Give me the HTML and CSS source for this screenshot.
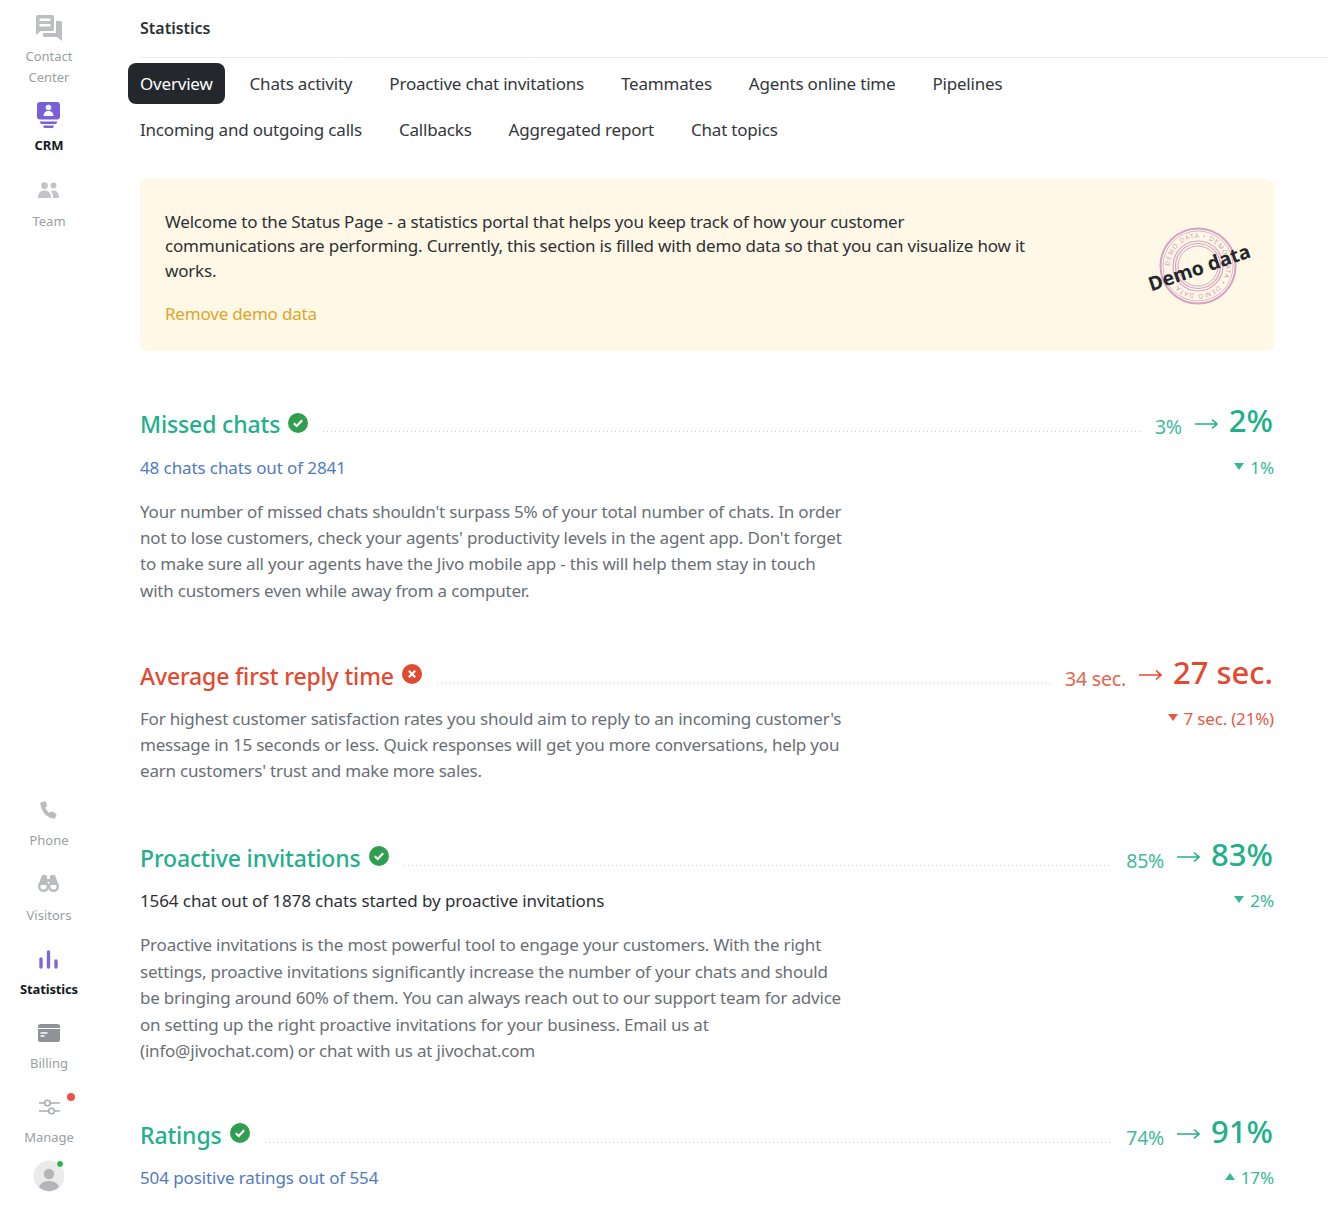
FILE: index.html
```html
<!DOCTYPE html>
<html lang="en">
<head>
<meta charset="utf-8">
<title>Statistics</title>
<link rel="stylesheet" href="styles.css">
</head>
<body>
<div class="app">
  <nav class="side">
    <div class="side-group">
      <a class="nav nav-contact"><svg width="26" height="26" viewBox="0 0 26 26"><path fill="#bcbec1" d="M0 1.500A1.500 1.500 0 0 1 1.500 0h15A1.500 1.500 0 0 1 18 1.500v13a1.500 1.500 0 0 1-1.500 1.500H5l-5 4z"/><path fill="#fff" d="M3.500 3.500h11v2.500h-11zM3.500 9h11v2.500h-11z"/><path fill="#bcbec1" d="M20 6h4.500A1.500 1.500 0 0 1 26 7.500V26l-5-4H8.500A1.500 1.500 0 0 1 7 20.500V18h13z"/></svg><span>Contact<br>Center</span></a>
      <a class="nav nav-crm active"><svg width="23" height="26" viewBox="0 0 23 26"><rect width="23" height="17.500" rx="3" fill="#7a5fd6"/><circle cx="11.500" cy="5.500" r="2.800" fill="#fff"/><path fill="#fff" d="M6.500 14c0-3 2-5 5-5s5 2 5 5z"/><path fill="#7a5fd6" d="M2.500 19.500h18L19 22H4zM6 23.500h11L16 26H7z"/></svg><span>CRM</span></a>
      <a class="nav nav-team"><svg width="21" height="16" viewBox="0 0 21 16"><circle cx="6.500" cy="3.600" r="3.400" fill="#c2c4c7"/><circle cx="15.500" cy="3.600" r="3" fill="#c2c4c7"/><path fill="#c2c4c7" d="M0 16c0-5 2.500-7.500 6.500-7.500S13 11 13 16zM15 16c0-3-.6-5-2-6.800 1-.5 1.700-.7 2.700-.7 3 0 5.300 2.500 5.300 7.500z"/></svg><span>Team</span></a>
    </div>
    <div class="side-group">
      <a class="nav"><svg width="18" height="18" viewBox="0 0 18 18"><path fill="#b9bbbe" d="M1.200 1.200 4.500.2c.7-.2 1.200.2 1.400.8L7 4.200c.2.600 0 1-.4 1.400L5.300 6.700c.8 2 2.200 3.900 4.200 5.100l1.400-1.100c.5-.4 1-.4 1.500-.1l3.600 2.100c.6.400.7.900.4 1.500l-1.200 2.700c-.3.500-.8.700-1.400.6C6 16.500 1.500 10.500.3 2.500c-.1-.6.400-1.100.9-1.300z"/></svg><span>Phone</span></a>
      <a class="nav nav-visitors"><svg width="21" height="17" viewBox="0 0 21 17"><path fill="#b9bbbe" d="M3.500 1.500C3.500.500 4.300 0 5.500 0H7c1.200 0 2 .5 2 1.500V4h3V1.500C12 .5 12.800 0 14 0h1.500c1.200 0 2 .5 2 1.500l3 8.500h-8l-.5-3h-3l-.5 3H.5z"/><circle cx="5.500" cy="11.500" r="4.300" fill="none" stroke="#b9bbbe" stroke-width="2.400"/><circle cx="15.500" cy="11.500" r="4.300" fill="none" stroke="#b9bbbe" stroke-width="2.400"/></svg><span>Visitors</span></a>
      <a class="nav active"><svg width="19" height="19" viewBox="0 0 19 19"><path stroke="#7f68d3" stroke-width="3.400" stroke-linecap="round" d="M2 9v8M9.500 2v15M17 11v6"/></svg><span class="tight">Statistics</span></a>
      <a class="nav"><svg width="22" height="18" viewBox="0 0 22 18"><rect width="22" height="18" rx="2.500" fill="#8e9399"/><path stroke="#fff" stroke-width="1" d="M0 4.500h22"/><path stroke="#fff" stroke-width="1.300" d="M2.500 9h7M2.500 12h4"/></svg><span>Billing</span></a>
      <a class="nav"><svg width="21" height="18" viewBox="0 0 21 18"><g fill="none" stroke="#a9acb0" stroke-width="1.600"><path d="M0 5h6M11.500 5H21M0 13h9.500M15 13h6"/><circle cx="8.500" cy="5" r="2.800"/><circle cx="12.500" cy="13" r="2.800"/></g></svg><i class="dot-red"></i><span>Manage</span></a>
      <a class="avatar"><svg width="32" height="32" viewBox="0 0 32 32"><circle cx="16" cy="16" r="15.500" fill="#ebebec"/><circle cx="16" cy="14" r="5.200" fill="#b4b5b8"/><path fill="#b4b5b8" d="M6 27c1.500-4 5-6 10-6s8.500 2 10 6c-5.500 5.500-14.500 5.500-20 0z"/></svg><i class="dot-green"></i></a>
    </div>
  </nav>

  <main class="main">
    <header class="head"><h1>Statistics</h1></header>
    <div class="tabs">
      <div class="tab-row">
        <a class="tab current">Overview</a>
        <a class="tab">Chats activity</a>
        <a class="tab">Proactive chat invitations</a>
        <a class="tab">Teammates</a>
        <a class="tab">Agents online time</a>
        <a class="tab">Pipelines</a>
      </div>
      <div class="tab-row">
        <a class="tab">Incoming and outgoing calls</a>
        <a class="tab">Callbacks</a>
        <a class="tab">Aggregated report</a>
        <a class="tab">Chat topics</a>
      </div>
    </div>

    <section class="banner">
      <div class="banner-text">
        <p>Welcome to the Status Page - a statistics portal that helps you keep track of how your customer communications are performing. Currently, this section is filled with demo data so that you can visualize how it works.</p>
        <a class="remove">Remove demo data</a>
      </div>
      <div class="stamp">
        <svg width="80" height="80" viewBox="0 0 80 80">
          <defs><path id="ring" d="M40 40m-28 0a28 28 0 1 1 56 0a28 28 0 1 1-56 0"/></defs>
          <g fill="none" stroke="#d6a3c4">
            <circle cx="40" cy="40" r="37.500" stroke-width="2"/>
            <circle cx="40" cy="40" r="35" stroke-width=".8"/>
            <circle cx="40" cy="40" r="25" stroke-width="1.200"/>
            <circle cx="40" cy="40" r="22.500" stroke-width="1.200"/>
            <circle cx="40" cy="40" r="20" stroke-width="1"/>
          </g>
          <text class="stamp-ring"><textPath href="#ring">DEMO DATA • DEMO DATA • DEMO DATA •</textPath></text>
        </svg>
        <span class="stamp-label">Demo data</span>
      </div>
    </section>

    <section class="metric good m1">
      <div class="metric-top">
        <h2>Missed chats</h2>
        <svg class="badge" width="20" height="20" viewBox="0 0 20 20"><circle cx="10" cy="10" r="10" fill="#2f9e4f"/><path d="M5.800 10.300 8.700 13l5.500-5.800" fill="none" stroke="#fff" stroke-width="2.200"/></svg>
        <span class="dots"></span>
        <span class="was">3%</span><svg class="arrow" width="23" height="12" viewBox="0 0 23 12"><path d="M0 6h22M17 1.500 22 6l-5 4.500" fill="none" stroke="currentColor" stroke-width="1.600"/></svg><span class="now">2%</span>
      </div>
      <div class="metric-sub">
        <a class="link">48 chats chats out of 2841</a>
        <span class="delta"><i class="tri down"></i>1%</span>
      </div>
      <p class="desc">Your number of missed chats shouldn't surpass 5% of your total number of chats. In order not to lose customers, check your agents' productivity levels in the agent app. Don't forget to make sure all your agents have the Jivo mobile app - this will help them stay in touch with customers even while away from a computer.</p>
    </section>

    <section class="metric bad m2">
      <div class="metric-top">
        <h2>Average first reply time</h2>
        <svg class="badge" width="20" height="20" viewBox="0 0 20 20"><circle cx="10" cy="10" r="10" fill="#e3492f"/><path d="m6.800 6.800 6.400 6.400m0-6.400-6.400 6.400" fill="none" stroke="#fff" stroke-width="2.200"/></svg>
        <span class="dots"></span>
        <span class="was">34 sec.</span><svg class="arrow" width="23" height="12" viewBox="0 0 23 12"><path d="M0 6h22M17 1.500 22 6l-5 4.500" fill="none" stroke="currentColor" stroke-width="1.600"/></svg><span class="now">27 sec.</span>
      </div>
      <div class="metric-body">
        <p class="desc">For highest customer satisfaction rates you should aim to reply to an incoming customer's message in 15 seconds or less. Quick responses will get you more conversations, help you earn customers' trust and make more sales.</p>
        <span class="delta"><i class="tri down"></i>7 sec. (21%)</span>
      </div>
    </section>

    <section class="metric good m3">
      <div class="metric-top">
        <h2>Proactive invitations</h2>
        <svg class="badge" width="20" height="20" viewBox="0 0 20 20"><circle cx="10" cy="10" r="10" fill="#2f9e4f"/><path d="M5.800 10.300 8.700 13l5.500-5.800" fill="none" stroke="#fff" stroke-width="2.200"/></svg>
        <span class="dots"></span>
        <span class="was">85%</span><svg class="arrow" width="23" height="12" viewBox="0 0 23 12"><path d="M0 6h22M17 1.500 22 6l-5 4.500" fill="none" stroke="currentColor" stroke-width="1.600"/></svg><span class="now">83%</span>
      </div>
      <div class="metric-sub">
        <span class="plain">1564 chat out of 1878 chats started by proactive invitations</span>
        <span class="delta"><i class="tri down"></i>2%</span>
      </div>
      <p class="desc">Proactive invitations is the most powerful tool to engage your customers. With the right settings, proactive invitations significantly increase the number of your chats and should be bringing around 60% of them. You can always reach out to our support team for advice on setting up the right proactive invitations for your business. Email us at (info@jivochat.com) or chat with us at jivochat.com</p>
    </section>

    <section class="metric good m4">
      <div class="metric-top">
        <h2>Ratings</h2>
        <svg class="badge" width="20" height="20" viewBox="0 0 20 20"><circle cx="10" cy="10" r="10" fill="#2f9e4f"/><path d="M5.800 10.300 8.700 13l5.500-5.800" fill="none" stroke="#fff" stroke-width="2.200"/></svg>
        <span class="dots"></span>
        <span class="was">74%</span><svg class="arrow" width="23" height="12" viewBox="0 0 23 12"><path d="M0 6h22M17 1.500 22 6l-5 4.500" fill="none" stroke="currentColor" stroke-width="1.600"/></svg><span class="now">91%</span>
      </div>
      <div class="metric-sub">
        <a class="link">504 positive ratings out of 554</a>
        <span class="delta"><i class="tri up"></i>17%</span>
      </div>
    </section>
  </main>
</div>
</body>
</html>
```
FILE: styles.css
```css
* { box-sizing: border-box; }
html, body { margin: 0; height: 100%; overflow: hidden; background: #fff; }
body { font-family: "Noto Sans", "Open Sans", sans-serif; color: #24272b; }
.app { display: flex; height: 1210px; }

.side { width: 98px; flex: none; display: flex; flex-direction: column; justify-content: space-between; padding: 12px 0 18px; }
.side-group { display: flex; flex-direction: column; align-items: center; }
.nav { position: relative; display: grid; grid-template-rows: 32px auto; row-gap: 4px; justify-items: center; align-items: center; text-align: center; font-size: 13px; line-height: 21px; color: #9a9ea3; margin-top: 17px; }
.nav svg { display: block; }
.nav.active { color: #15181c; font-weight: 700; }
.nav .tight { letter-spacing: -.15px; }
.nav-contact { margin-top: 0; row-gap: 1.500px; }
.nav-crm { margin-top: 11.500px; }
.nav-team { margin-top: 18px; row-gap: 5px; }
.nav-visitors { margin-top: 18px; }
.nav-visitors svg { margin-bottom: 3px; }
.side-group:last-child .nav:first-child { margin-top: 0; }
.dot-red { position: absolute; top: 2px; left: 43px; width: 8px; height: 8px; border-radius: 50%; background: #ee5442; }
.avatar { position: relative; display: block; width: 32px; height: 32px; margin-top: 12px; }
.avatar svg { display: block; }
.dot-green { position: absolute; top: 0; right: 1px; width: 8px; height: 8px; border-radius: 50%; background: #28b446; border: 1px solid #fff; }

.main { flex: 1; min-width: 0; padding-left: 30px; }
.head { margin-left: 12px; height: 58px; border-bottom: 1px solid #ececec; display: flex; align-items: center; padding-bottom: 1px; }
.head h1 { margin: 0; font-size: 16px; font-weight: 600; color: #2d3136; }
.tabs { display: flex; flex-direction: column; row-gap: 5px; margin-top: 5px; }
.tab-row { display: flex; column-gap: 13px; }
.tab { height: 41px; padding: 0 12px; display: flex; align-items: center; font-size: 17px; letter-spacing: -.2px; color: #33373c; border-radius: 8px; white-space: nowrap; }
.tab.current { background: #24282d; color: #fff; }

.banner { margin: 29px 54px 0 12px; height: 172px; background: #fff8e6; border-radius: 8px; padding: 30.500px 22px 0 25px; display: flex; justify-content: space-between; }
.banner-text { width: 865px; font-size: 17px; letter-spacing: -.2px; line-height: 24.500px; color: #2c3035; }
.banner-text p { margin: 0 0 19px; }
.remove { color: #e0a526; }
.stamp { position: relative; width: 80px; height: 80px; margin-top: 16px; margin-right: 14px; }
.stamp svg { display: block; }
.stamp-ring { font-size: 6.500px; fill: #d29bbd; letter-spacing: 1px; font-family: "Noto Sans", sans-serif; }
.stamp-label { position: absolute; left: -12px; top: 28px; width: 104px; text-align: center; font-size: 19.500px; font-weight: 700; color: #24272b; transform: rotate(-19deg); white-space: nowrap; }

.metric { margin-left: 12px; margin-right: 54px; }
.m1 { margin-top: 49px; }
.m2 { margin-top: 47.500px; }
.m3 { margin-top: 49px; }
.m4 { margin-top: 46.500px; }
.metric-top { display: flex; align-items: center; height: 50px; }
.metric h2 { margin: 0; font-size: 23px; font-weight: 500; letter-spacing: -.15px; line-height: 1.200; white-space: nowrap; }
.badge { flex: none; margin: -5px 0 0 8px; }
.dots { flex: 1; height: 1px; margin: 13px 14px 0 15px; background-image: linear-gradient(to right, #cfd2d5 1px, transparent 1px); background-size: 4px 1px; }
.was { font-size: 19.500px; letter-spacing: -.2px; margin-top: 3px; opacity: .85; }
.arrow { flex: none; margin: -3px 11px 0 13px; }
.now { font-size: 31px; font-weight: 500; margin-bottom: 9px; margin-right: 1px; line-height: 1; }
.good .metric-top, .good .delta, .good h2 { color: #21b08a; }
.bad .metric-top, .bad .delta, .bad h2 { color: #e3492f; }
.delta { display: inline-flex; align-items: center; opacity: .9; }
.metric-sub { display: flex; justify-content: space-between; align-items: center; height: 30px; margin-top: 2px; font-size: 17px; letter-spacing: -.1px; }
.metric-body { display: flex; justify-content: space-between; align-items: flex-start; margin-top: 2px; }
.metric-body .desc { margin-top: 2px; }
.metric-body .delta { height: 30px; font-size: 17px; letter-spacing: -.2px; }
.link { color: #4f7ac0; }
.plain { color: #2c3035; }
.tri { width: 0; height: 0; margin-right: 6px; border-left: 5.500px solid transparent; border-right: 5.500px solid transparent; }
.tri.down { border-top: 7px solid currentColor; margin-top: -2px; }
.tri.up { border-bottom: 7px solid currentColor; margin-top: -2px; }
.desc { width: 708px; margin: 16.500px 0 0; font-size: 17px; letter-spacing: -.2px; line-height: 26.400px; color: #6a6f75; }
```
